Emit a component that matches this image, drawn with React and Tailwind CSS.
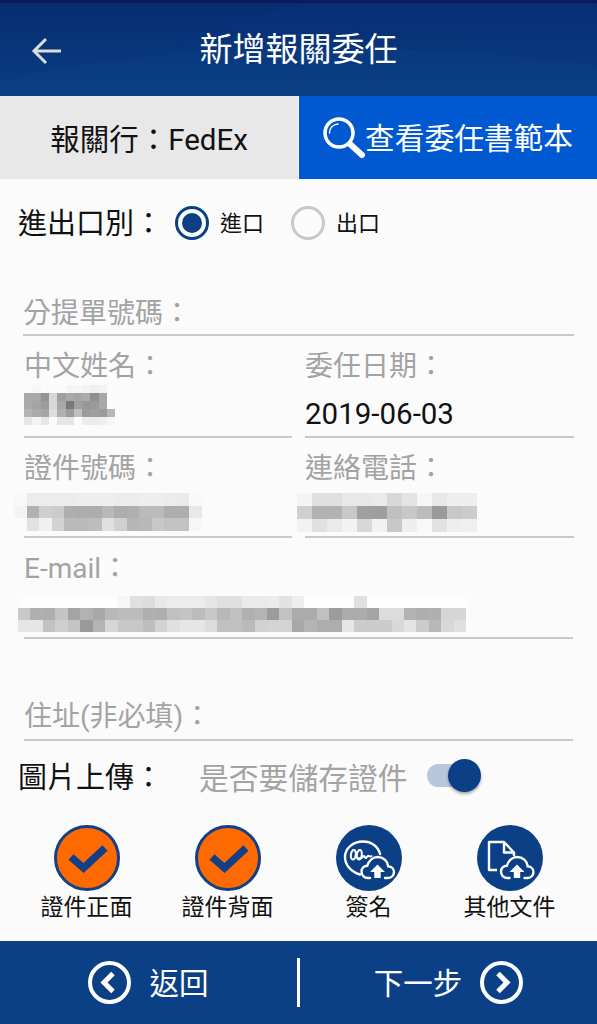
const font = { fontFamily: '"Roboto", "Noto Sans CJK TC", sans-serif' };

// mosaic blocks hiding personal data: one string per row, two hex digits of gray per cell
const nameBlur = [
  'fbf7fbf9fbf4f6f3f0f2fb',
  'a8a894d6a0aaa4aa8fa8fb',
  'aaa49cd8a878a0989aa8fb',
  'b4aaa6ddb09cc09ca09cb8',
  'e6f3e6fbe6e6fbececf0f6',
];
const idBlur = [
  'f8ececececeeeeeeececeeeeeceaf9',
  'f4b2cfcbafadadb8adb0bbbbaeaee8',
  'fbe2f0d2bababde0d0b6b8c8c2c2f6',
];
const phoneBlur = [
  'f4e0e0e8e8ead8e4f6e8eeee',
  'cfb2b2c8a09ec0c8bc9ac8cc',
  'f2e0eaf2d8f2c8eef8e2eef0',
];
const emailBlur = [
  'fdfdfdfdfdfdfdfdf6e0dce8ececece6e0e0eaeaece2eefdfdfdfde0fdfdfdfdfdfdfd',
  'c8b0aec4a4b2a8b8bcbcb0aec0c4bcc8b8c0b0b49cc2acacc09cacaca4dcdcb2aeb0d6d6',
  'e6e6c2cec49ab4d6c8c8bed2e0e6e6dcc0c0bad2d4d4a8b4aeaee6ccccccd8e4ccb8d8e0e0',
];

function Mosaic({ rows, cw, ch, className }) {
  const cols = Math.floor(rows[1].length / 2);
  return (
    <svg width={cols * cw} height={rows.length * ch} className={className} shapeRendering="crispEdges">
      {rows.map((row, y) =>
        Array.from({ length: cols }).map((_, x) => {
          const v = row.slice(x * 2, x * 2 + 2) || 'fd';
          return <rect key={x} x={x * cw} y={y * ch} width={cw + 0.5} height={ch + 0.5} fill={`#${v}${v}${v}`} />;
        })
      )}
    </svg>
  );
}

function Label({ children }) {
  return <div className="text-[28px] leading-[34px] text-[#a3a3a3]">{children}</div>;
}

function CloudUp({ x, y }) {
  return (
    <g transform={`translate(${x} ${y})`}>
      <path
        d="M9 22H7C3 22 .5 19 .5 15.500c0-3.300 2.500-5.800 5.800-5.800C8 4.500 12 1 16.500 1c5.800 0 10.200 4 10.700 9.300 3.300.3 5.800 2.600 5.800 5.700 0 3.300-2.500 6-5.900 6H24"
        fill="none"
        stroke="#fff"
        strokeWidth="2.400"
        strokeLinecap="round"
      />
      <path d="M16.500 8.500l7.500 7.500h-4.300v6h-6.400v-6H9z" fill="#fff" />
    </g>
  );
}

function UploadItem({ label, children }) {
  return (
    <div className="flex w-[141px] flex-col items-center">
      {children}
      <div className="mt-[2px] text-[23px] leading-[30px] text-[#111]">{label}</div>
    </div>
  );
}

function CheckCircle() {
  return (
    <svg width="66" height="66" viewBox="0 0 66 66">
      <circle cx="33" cy="33" r="31.500" fill="#ff6a00" stroke="#123f85" strokeWidth="3" />
      <path d="M17 32l12.500 11L51 23" fill="none" stroke="#123f85" strokeWidth="7.500" />
    </svg>
  );
}

function SignCircle() {
  return (
    <svg width="66" height="66" viewBox="0 0 66 66">
      <circle cx="33" cy="33" r="33" fill="#0b3f86" />
      <path
        d="M44 29C42 21 35 16.500 27 16.500 17.500 16.500 9 23 9 32c0 8 6 15 15 17.500"
        fill="none"
        stroke="#fff"
        strokeWidth="2.400"
        strokeLinecap="round"
      />
      <path
        d="M17 25c-3 3-3 9 0 9.500s4-9.500 1-9.500M23 25c-3 3-3 9 0 9.500s4-9.500 1-9.500M23 33c2 2 4-2 5-2s1 2.500 2 2 2-3 3-2 1 1 2.500 0"
        fill="none"
        stroke="#fff"
        strokeWidth="2"
        strokeLinecap="round"
      />
      <CloudUp x={25} y={31} />
    </svg>
  );
}

function DocCircle() {
  return (
    <svg width="66" height="66" viewBox="0 0 66 66">
      <circle cx="33" cy="33" r="33" fill="#0b3f86" />
      <path
        d="M20 45h-8V17h15l10 10.500v3.500M27 17v10.500h10"
        fill="none"
        stroke="#fff"
        strokeWidth="2.400"
        strokeLinejoin="round"
      />
      <CloudUp x={23.500} y={31} />
    </svg>
  );
}

function ArrowCircle({ dir }) {
  return (
    <svg width="43" height="43" viewBox="0 0 43 43">
      <circle cx="21.500" cy="21.500" r="19.500" fill="none" stroke="#fff" strokeWidth="4" />
      <path
        d={dir === 'left' ? 'M25 12.500l-9 9 9 9' : 'M18 12.500l9 9-9 9'}
        fill="none"
        stroke="#fff"
        strokeWidth="5"
      />
    </svg>
  );
}

export default function App() {
  return (
    <div className="flex h-[1024px] w-[597px] flex-col overflow-hidden bg-[#fbfbfb]" style={font}>
      <div className="h-[3px] bg-[#0c1a5c]" />
      <header className="relative flex h-[93px] items-center justify-center overflow-hidden bg-gradient-to-b from-[#062d72] to-[#0b3d84]">
        <svg className="absolute inset-0" width="597" height="93" viewBox="0 0 597 93">
          <path d="M0 78C120 48 330 30 597 62V93H0z" fill="#0c4288" opacity="0.35" />
          <path d="M170 42C300 22 460 24 597 44V0H300z" fill="#0a3580" opacity="0.3" />
        </svg>
        <svg className="absolute left-[31px] top-[33px]" width="32" height="30" viewBox="0 0 32 30">
          <path d="M30 15H4M15 3L3 15l12 12" fill="none" stroke="#dcdcdc" strokeWidth="3" />
        </svg>
        <h1 className="relative text-[33px] font-normal leading-none text-white">新增報關委任</h1>
      </header>

      <div className="flex h-[83px]">
        <div className="flex w-[298px] items-center justify-center bg-[#e8e8e8] pt-[5px] text-[29.500px] text-[#111]">報關行：FedEx</div>
        <div className="ml-px flex flex-1 items-center justify-center bg-[#0159d1] pr-[1px] text-[29.700px] text-white">
          <svg width="43" height="43" viewBox="0 0 43 43">
            <circle cx="17" cy="17" r="14" fill="none" stroke="#fff" strokeWidth="3.500" />
            <path d="M7.500 17C7.500 12 11 8.500 16 8" fill="none" stroke="#fff" strokeWidth="1.500" strokeLinecap="round" />
            <path d="M28 28l12 11" stroke="#fff" strokeWidth="6" strokeLinecap="round" />
          </svg>
          <span className="pt-[4px]">查看委任書範本</span>
        </div>
      </div>

      <main className="flex flex-1 flex-col">
        <div className="mt-[24px] flex h-[40px] items-center pl-[18px]">
          <span className="w-[157px] pt-[4px] text-[29px] text-[#111]">進出口別：</span>
          <span className="flex h-[34px] w-[34px] items-center justify-center rounded-full border-[3.500px] border-[#0b3f86]">
            <span className="h-[20px] w-[20px] rounded-full bg-[#0b3f86]" />
          </span>
          <span className="ml-[11px] text-[22px] text-[#111]">進口</span>
          <span className="ml-[27px] h-[34px] w-[34px] rounded-full border-[3.500px] border-[#c8c8c8]" />
          <span className="ml-[11px] text-[22px] text-[#111]">出口</span>
        </div>

        <div className="mt-[49px] px-[24px]">
          <div className="mx-[-1px] h-[44px] border-b-2 border-[#cacaca] pt-[5px]">
            <Label>分提單號碼：</Label>
          </div>
        </div>

        <div className="mt-[12px] grid grid-cols-[268px_269px] gap-x-[13px] pl-[24px]">
          <div className="h-[90px] border-b-2 border-[#cacaca] pt-[2px]">
            <Label>中文姓名：</Label>
            <Mosaic rows={nameBlur} cw={8.300} ch={8} className="mt-[1px]" />
          </div>
          <div className="h-[90px] border-b-2 border-[#cacaca] pt-[2px]">
            <Label>委任日期：</Label>
            <div className="mt-[13px] text-[29.500px] leading-[34px] text-[#111]">2019-06-03</div>
          </div>
          <div className="mt-[9px] h-[91px] border-b-2 border-[#cacaca] pt-[5px]">
            <Label>證件號碼：</Label>
            <Mosaic rows={idBlur} cw={12.500} ch={12.500} className="ml-[-10px] mt-[7px]" />
          </div>
          <div className="mt-[9px] h-[91px] border-b-2 border-[#cacaca] pt-[5px]">
            <Label>連絡電話：</Label>
            <Mosaic rows={phoneBlur} cw={15} ch={13} className="ml-[-8px] mt-[7px]" />
          </div>
        </div>

        <div className="mt-[14px] px-[24px]">
          <div className="h-[87px] border-b-2 border-[#cacaca]">
            <Label>E-mail：</Label>
            <Mosaic rows={emailBlur} cw={12.450} ch={12} className="ml-[-6px] mt-[10px]" />
          </div>
        </div>

        <div className="mt-[58px] px-[24px]">
          <div className="h-[44px] border-b-2 border-[#cacaca] pt-[3px]">
            <Label>住址(非必填)：</Label>
          </div>
        </div>

        <div className="mt-[16px] flex h-[40px] items-center pl-[18px]">
          <span className="w-[181px] pt-[4px] text-[29px] text-[#111]">圖片上傳：</span>
          <span className="pt-[4px] text-[29.800px] text-[#a3a3a3]">是否要儲存證件</span>
          <span className="relative mb-[4px] ml-[19px] h-[23px] w-[38px] rounded-full bg-[#b9c7dd]">
            <span className="absolute left-[21px] top-[-5px] h-[33px] w-[33px] rounded-full bg-[#0b3f86] shadow-[0_2px_3px_rgba(0,0,0,0.35)]" />
          </span>
        </div>

        <div className="mt-[28px] flex pl-[16px]">
          <UploadItem label="證件正面"><CheckCircle /></UploadItem>
          <UploadItem label="證件背面"><CheckCircle /></UploadItem>
          <UploadItem label="簽名"><SignCircle /></UploadItem>
          <UploadItem label="其他文件"><DocCircle /></UploadItem>
        </div>
      </main>

      <footer className="flex h-[83px] items-center bg-[#0b3f86] text-[29.500px] text-white">
        <div className="flex w-[297px] items-center justify-center gap-[18px]">
          <ArrowCircle dir="left" />
          <span className="pt-[4px]">返回</span>
        </div>
        <div className="h-[49px] w-[3px] bg-white" />
        <div className="flex flex-1 items-center justify-center gap-[18px]">
          <span className="pt-[4px]">下一步</span>
          <ArrowCircle dir="right" />
        </div>
      </footer>
    </div>
  );
}
